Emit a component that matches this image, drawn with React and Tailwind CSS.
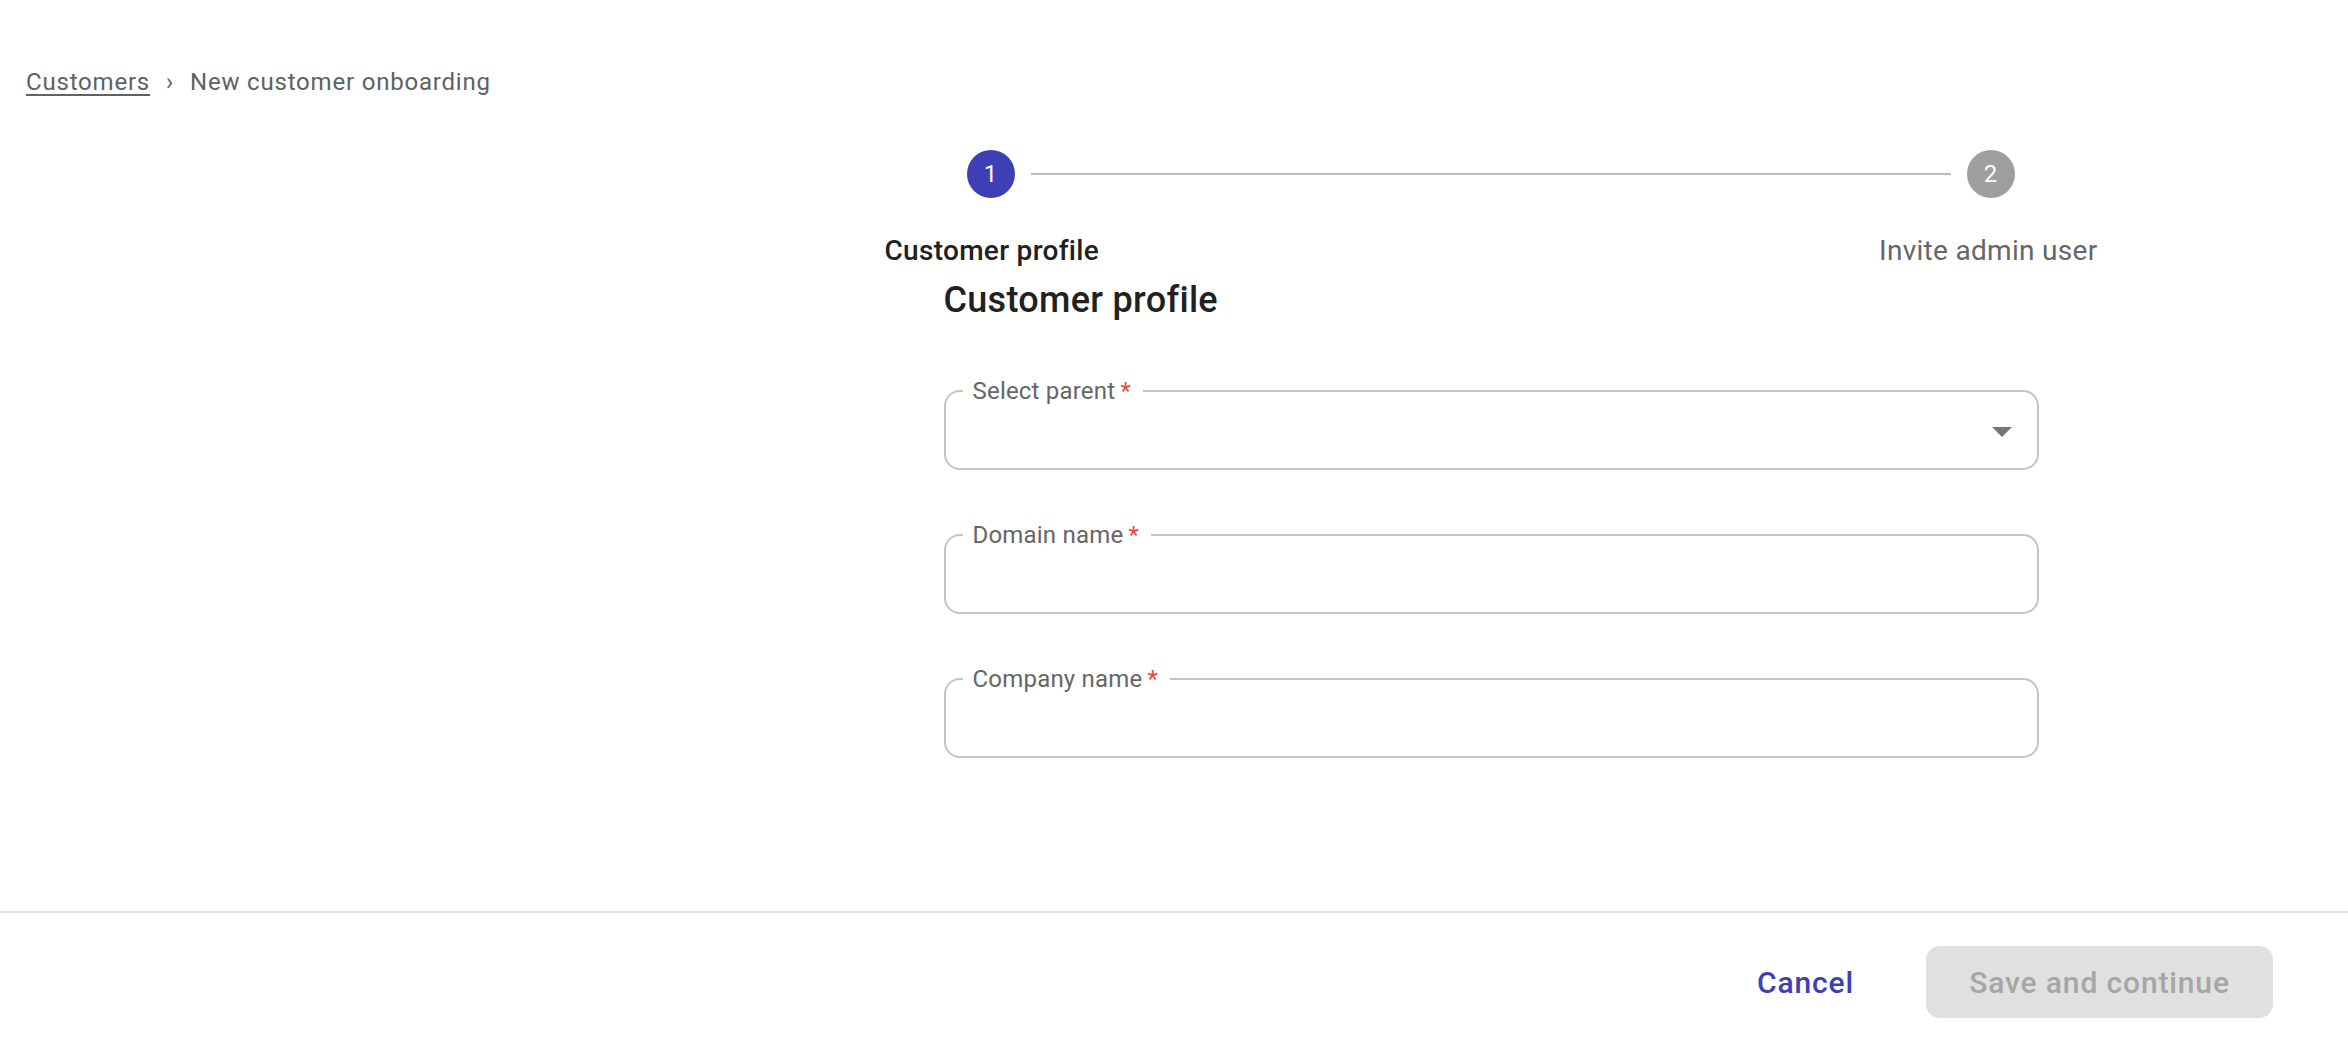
import React from 'react';

const font = { fontFamily: 'Roboto, "Noto Sans", sans-serif' };

const Field = ({ label, select }) => (
  <fieldset className="w-full min-w-0 border-2 border-[#c4c4c4] rounded-[16px] px-[17px]">
    <legend className="pl-[10px] pr-[12px] text-[24px] leading-[24px] tracking-[0.2px] text-[#666666]">
      {label}
      <span className="text-[#f44336]">{'\u2009*'}</span>
    </legend>
    <div className="h-[65px] flex items-center justify-end pr-[8px] pb-[8px]">
      {select && (
        <svg width="20" height="10" viewBox="0 0 20 10">
          <polygon points="0,0 20,0 10,10" fill="#757575" />
        </svg>
      )}
    </div>
  </fieldset>
);

const App = () => {
  return (
    <div className="w-[2348px] h-[1044px] flex flex-col bg-white" style={font}>
      <div className="flex-1 flex flex-col">
        {/* breadcrumb */}
        <div className="pt-[70px] pl-[26px] flex items-center text-[24px] leading-[24px] tracking-[0.8px] text-[#616161]">
          <a href="#" className="underline underline-offset-[4px] decoration-[2px]">Customers</a>
          <span className="mx-[16px]">›</span>
          <span>New customer onboarding</span>
        </div>

        <div className="flex">
          <div className="w-[634px]" />
          <div className="flex-1 flex flex-col items-center">
            {/* stepper */}
            <div className="w-[1213px] mt-[56px]">
              <div className="flex items-center pl-[82px] pr-[83px]">
                <div className="w-[48px] h-[48px] rounded-full bg-[#3d40b5] text-white text-[24px] flex items-center justify-center">1</div>
                <div className="flex-1 h-[2px] bg-[#bdbdbd] mx-[16px]" />
                <div className="w-[48px] h-[48px] rounded-full bg-[#9e9e9e] text-white text-[24px] flex items-center justify-center">2</div>
              </div>
              <div className="flex justify-between mt-[37px] text-[28px] leading-[32px] tracking-[0.3px]">
                <span className="font-medium text-[#212121]">Customer profile</span>
                <span className="text-[#666666]">Invite admin user</span>
              </div>
            </div>

            {/* form */}
            <div className="w-[1095px] mt-[12px]">
              <h2 className="text-[36px] leading-[42px] tracking-[0.3px] font-medium text-[#212121]">Customer profile</h2>
              <div className="mt-[58px] flex flex-col gap-[53px]">
                <Field label="Select parent" select />
                <Field label="Domain name" />
                <Field label="Company name" />
              </div>
            </div>
          </div>
        </div>
      </div>

      <div className="h-[2px] bg-[#e0e0e0]" />

      <div className="h-[131px] flex items-start justify-end pt-[33px] pr-[75px] gap-[54px]">
        <button className="h-[72px] px-[18px] text-[30px] font-medium tracking-[0.86px] text-[#3d40b5]">Cancel</button>
        <button disabled className="w-[347px] h-[72px] rounded-[14px] bg-[#e0e0e0] text-[30px] font-medium tracking-[0.86px] text-[#a6a6a6]">
          Save and continue
        </button>
      </div>
    </div>
  );
};

export default App;
